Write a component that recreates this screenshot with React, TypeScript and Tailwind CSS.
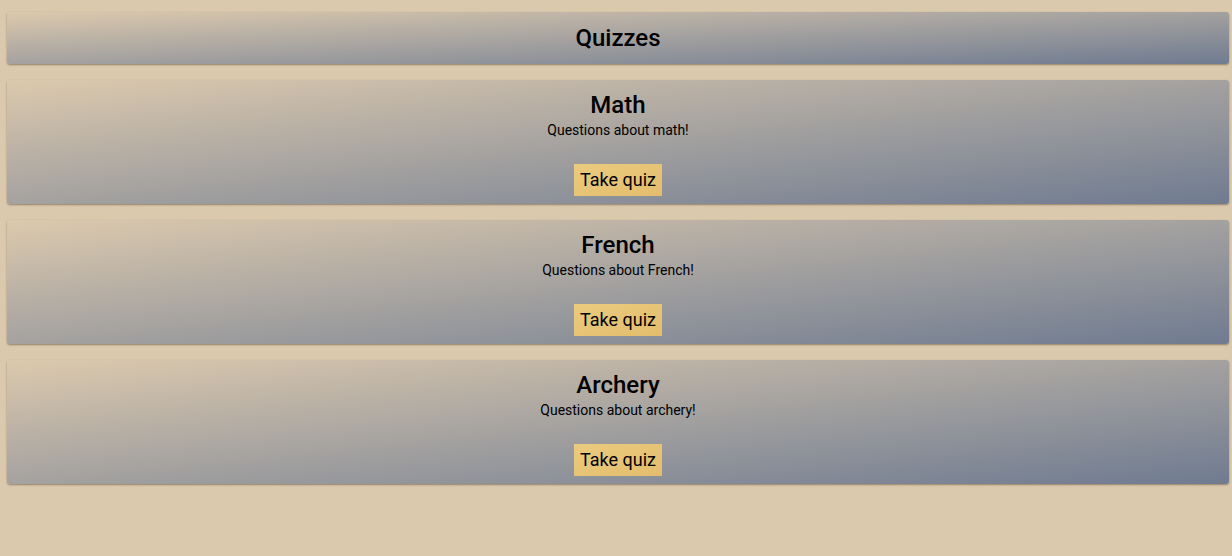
import React from 'react';

interface Quiz {
  title: string;
  description: string;
}

const quizzes: Quiz[] = [
  { title: 'Math', description: 'Questions about math!' },
  { title: 'French', description: 'Questions about French!' },
  { title: 'Archery', description: 'Questions about archery!' },
];

const cardClasses =
  'rounded-[3px] bg-gradient-to-br from-[#dcc9ad] to-[#6f7b90] shadow-[0_1px_2px_rgba(60,40,20,0.45)]';

const QuizCard: React.FC<{ quiz: Quiz }> = ({ quiz }) => (
  <div className={`${cardClasses} flex flex-col items-center pt-[10px] pb-2`}>
    <h2 className="text-[24px] leading-[30px] font-medium text-black">{quiz.title}</h2>
    <p className="text-[14px] leading-[20px] text-black">{quiz.description}</p>
    <button className="mt-6 h-8 px-[6px] text-[18px] leading-[28px] text-black bg-gradient-to-br from-[#ebcb80] to-[#e2bd6c]">
      Take quiz
    </button>
  </div>
);

export default function App() {
  return (
    <div
      className="min-h-[556px] w-full bg-[#dbc9ae] pl-[7px] pr-[3px] pt-3"
      style={{ fontFamily: 'Roboto, "Liberation Sans", sans-serif' }}
    >
      <div className="flex flex-col gap-4">
        <div className={`${cardClasses} py-[10px] text-center`}>
          <h1 className="text-[24px] leading-[32px] font-medium text-black">Quizzes</h1>
        </div>
        {quizzes.map((q) => (
          <QuizCard key={q.title} quiz={q} />
        ))}
      </div>
    </div>
  );
}
